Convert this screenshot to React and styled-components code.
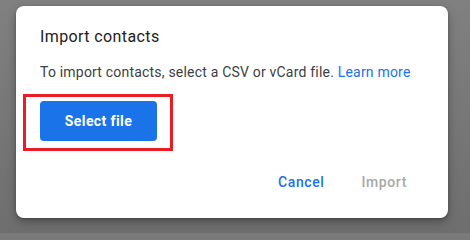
import styled, { createGlobalStyle } from "styled-components";

const GlobalStyle = createGlobalStyle`
  html, body {
    margin: 0;
    padding: 0;
    background: #7a7a7a;
    font-family: Roboto, "Liberation Sans", Arial, sans-serif;
  }
  #root {
    width: 470px;
    height: 233px;
    overflow: hidden;
  }
`;

const Backdrop = styled.div`
  width: 470px;
  height: 233px;
  padding: 6px 0 0 16px;
  box-sizing: border-box;
  background: linear-gradient(#808080, #6e6e6e);
`;

const Dialog = styled.div`
  width: 432px;
  height: 212px;
  box-sizing: border-box;
  background: #fff;
  border-radius: 8px;
  box-shadow: 0 4px 10px rgba(0, 0, 0, 0.28), 0 1px 3px rgba(0, 0, 0, 0.2);
  padding: 19px 24px 0 24px;
  display: flex;
  flex-direction: column;
`;

const Title = styled.h2`
  margin: 0;
  font-size: 16px;
  font-weight: 400;
  line-height: 24px;
  color: #202124;
  letter-spacing: 0.4px;
`;

const Body = styled.p`
  margin: 13px 0 0;
  font-size: 14px;
  line-height: 20px;
  color: #3c4043;
  letter-spacing: 0.2px;
`;

const Link = styled.a`
  color: #1a73e8;
  text-decoration: none;
`;

const Highlight = styled.div`
  align-self: flex-start;
  margin: 12px 0 0 -17px;
  padding: 4px 13px 7px 14px;
  border: 3px solid #ec1c24;
`;

const PrimaryButton = styled.button`
  width: 117px;
  height: 40px;
  border: none;
  border-radius: 4px;
  background: #1a73e8;
  color: #fff;
  font-family: inherit;
  font-size: 14px;
  font-weight: 700;
  letter-spacing: 0.4px;
  cursor: pointer;
`;

const Actions = styled.div`
  display: flex;
  justify-content: flex-end;
  gap: 3px;
  margin-top: 13px;
`;

const TextButton = styled.button`
  border: none;
  background: none;
  padding: 0 17px;
  height: 36px;
  font-family: inherit;
  font-size: 14px;
  font-weight: 500;
  letter-spacing: 0.6px;
  color: ${({ $disabled }) => ($disabled ? "#a8a8a8" : "#1a73e8")};
  cursor: ${({ $disabled }) => ($disabled ? "default" : "pointer")};
`;

export default function App() {
  return (
    <>
      <GlobalStyle />
      <Backdrop>
        <Dialog role="dialog">
          <Title>Import contacts</Title>
          <Body>
            To import contacts, select a CSV or vCard file.{" "}
            <Link href="#">Learn more</Link>
          </Body>
          <Highlight>
            <PrimaryButton>Select file</PrimaryButton>
          </Highlight>
          <Actions>
            <TextButton>Cancel</TextButton>
            <TextButton $disabled>Import</TextButton>
          </Actions>
        </Dialog>
      </Backdrop>
    </>
  );
}
